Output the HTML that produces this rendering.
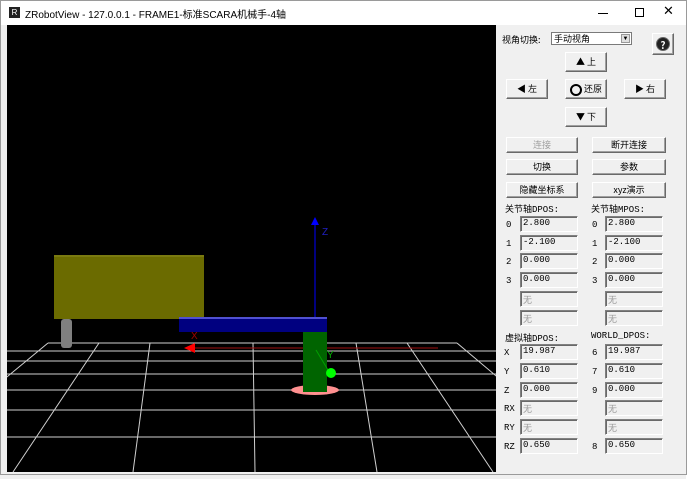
<!DOCTYPE html>
<html><head><meta charset="utf-8"><style>
*{margin:0;padding:0;box-sizing:border-box}
body{width:692px;height:479px;background:#fff;position:relative;overflow:hidden;font-family:"Liberation Sans","Noto Sans CJK SC",sans-serif;font-size:9px;color:#000}
.a{position:absolute}
.panel{left:496px;top:25px;width:190px;height:449px;background:#f0f0f0}
.btn{position:absolute;background:#f0f0f0;border:1px solid;border-color:#fff #696969 #696969 #fff;box-shadow:inset -1px -1px 0 #a0a0a0;font-size:9px;text-align:center;font-family:"Noto Sans CJK SC",sans-serif}
.inp{position:absolute;width:58px;height:16px;border:1px solid;border-color:#808080 #fff #fff #808080;box-shadow:inset 1px 1px 0 #696969;font-family:"Liberation Mono",monospace;font-size:9px;padding:1px 0 0 2px;color:#000}
.dis{color:#999;font-family:"Noto Sans CJK SC",sans-serif}
.lb{position:absolute;font-family:"Liberation Mono","Noto Sans CJK SC",monospace;font-size:9px}
</style></head><body>
<div class="a" style="left:0;top:0;width:692px;height:25px;background:#fff"></div>
<div class="a" style="left:9px;top:7px;width:11px;height:11px;background:#222;color:#fff;font-size:8px;line-height:11px;text-align:center">R</div>
<div class="a" style="left:25px;top:6px;font-size:10px;color:#000;font-family:'Liberation Sans','Noto Sans CJK SC',sans-serif">ZRobotView - 127.0.0.1 - FRAME1-标准SCARA机械手-4轴</div>
<div class="a" style="left:598px;top:13px;width:10px;height:1px;background:#000"></div>
<div class="a" style="left:635px;top:8px;width:9px;height:9px;border:1px solid #000"></div>
<div class="a" style="left:663px;top:3px;font-size:13px;color:#000">✕</div>
<div class="a" style="left:0;top:25px;width:692px;height:454px;background:#f0f0f0"></div>
<div class="a" style="left:686px;top:25px;width:6px;height:454px;background:#fff"></div>
<svg class="a" style="left:7px;top:25px" width="489" height="447" viewBox="7 25 489 447">
<rect x="7" y="25" width="489" height="447" fill="#000"/>
<g stroke="#d0d0d0" stroke-width="1">
<line x1="48" y1="343" x2="457" y2="343"/>
<line x1="7" y1="351" x2="496" y2="351"/>
<line x1="7" y1="361" x2="496" y2="361"/>
<line x1="7" y1="374" x2="496" y2="374"/>
<line x1="7" y1="390" x2="496" y2="390"/>
<line x1="7" y1="410" x2="496" y2="410"/>
<line x1="7" y1="437" x2="496" y2="437"/>
<line x1="253" y1="343" x2="255" y2="472"/>
<line x1="150" y1="343" x2="133" y2="472"/>
<line x1="99" y1="343" x2="13" y2="472"/>
<line x1="48" y1="343" x2="-108" y2="472"/>
<line x1="-3" y1="343" x2="-229" y2="472"/>
<line x1="356" y1="343" x2="377" y2="472"/>
<line x1="407" y1="343" x2="493" y2="472"/>
<line x1="457" y1="343" x2="610" y2="472"/>
<line x1="508" y1="343" x2="730" y2="472"/>
</g>
<line x1="190" y1="348" x2="438" y2="348" stroke="#a01010"/>
<polygon points="184,348 195,343 195,353" fill="#f00"/>
<text x="191" y="339" fill="#a00000" font-size="10" font-family="Liberation Sans">X</text>
<rect x="54" y="255" width="150" height="64" fill="#6b6b00"/>
<rect x="54" y="255" width="150" height="2" fill="#7a7a10"/>
<rect x="61" y="319" width="11" height="29" rx="3" fill="#808080"/>
<ellipse cx="315" cy="390" rx="24" ry="5" fill="#ff9090"/>
<rect x="303" y="331" width="24" height="61" fill="#006400"/>
<rect x="179" y="318" width="148" height="14" fill="#000080"/>
<rect x="179" y="317" width="148" height="2" fill="#5050d0"/>
<line x1="315" y1="223" x2="315" y2="317" stroke="#0000ff"/>
<polygon points="315,217 311,225 319,225" fill="#0000ff"/>
<text x="322" y="235" fill="#2020c0" font-size="10" font-family="Liberation Sans">Z</text>
<line x1="316" y1="350" x2="328" y2="370" stroke="#00a000"/>
<text x="327" y="358" fill="#00b000" font-size="10" font-family="Liberation Sans">Y</text>
<circle cx="331" cy="373" r="5" fill="#00ff00"/>
</svg>
<div class="a panel"></div>
<div class="lb" style="left:502px;top:33px;font-family:'Noto Sans CJK SC',sans-serif">视角切换:</div>
<div class="a" style="left:551px;top:32px;width:81px;height:13px;background:#fff;border:1px solid #7a7a7a;font-family:'Noto Sans CJK SC',sans-serif;font-size:9px;line-height:11px;padding-left:2px">手动视角</div>
<div class="a" style="left:621px;top:34px;width:9px;height:9px;background:#e0e0e0;border:1px solid #999;font-size:6px;line-height:8px;text-align:center">▼</div>
<div class="btn" style="left:652px;top:33px;width:22px;height:22px"><div style="margin:3px auto;width:14px;height:14px;border-radius:50%;background:#222;color:#fff;font-weight:bold;font-size:10px;line-height:14px;border:1px solid #666">?</div></div>
<div class="btn" style="left:565px;top:52px;width:42px;height:20px;line-height:18px">▲ 上</div>
<div class="btn" style="left:506px;top:79px;width:42px;height:20px;line-height:18px">◀ 左</div>
<div class="btn" style="left:565px;top:79px;width:42px;height:20px;line-height:18px"><span style="display:inline-block;width:12px;height:12px;border:2px solid #000;border-radius:50%;vertical-align:middle"></span> 还原</div>
<div class="btn" style="left:624px;top:79px;width:42px;height:20px;line-height:18px">▶ 右</div>
<div class="btn" style="left:565px;top:107px;width:42px;height:20px;line-height:18px">▼ 下</div>
<div class="btn" style="left:506px;top:137px;width:72px;height:16px;line-height:14px;color:#a0a0a0">连接</div>
<div class="btn" style="left:592px;top:137px;width:74px;height:16px;line-height:14px">断开连接</div>
<div class="btn" style="left:506px;top:159px;width:72px;height:16px;line-height:14px">切换</div>
<div class="btn" style="left:592px;top:159px;width:74px;height:16px;line-height:14px">参数</div>
<div class="btn" style="left:506px;top:182px;width:72px;height:16px;line-height:14px">隐藏坐标系</div>
<div class="btn" style="left:592px;top:182px;width:74px;height:16px;line-height:14px">xyz演示</div>
<div class="lb" style="left:505px;top:202px">关节轴DPOS:</div>
<div class="lb" style="left:591px;top:202px">关节轴MPOS:</div>
<div class="lb" style="left:505px;top:331px">虚拟轴DPOS:</div>
<div class="lb" style="left:591px;top:331px">WORLD_DPOS:</div>

<div class="lb" style="left:506px;top:220px">0</div><div class="inp" style="left:520px;top:216px">2.800</div>
<div class="lb" style="left:506px;top:239px">1</div><div class="inp" style="left:520px;top:235px">-2.100</div>
<div class="lb" style="left:506px;top:257px">2</div><div class="inp" style="left:520px;top:253px">0.000</div>
<div class="lb" style="left:506px;top:276px">3</div><div class="inp" style="left:520px;top:272px">0.000</div>
<div class="inp dis" style="left:520px;top:291px">无</div>
<div class="inp dis" style="left:520px;top:310px">无</div>

<div class="lb" style="left:592px;top:220px">0</div><div class="inp" style="left:605px;top:216px">2.800</div>
<div class="lb" style="left:592px;top:239px">1</div><div class="inp" style="left:605px;top:235px">-2.100</div>
<div class="lb" style="left:592px;top:257px">2</div><div class="inp" style="left:605px;top:253px">0.000</div>
<div class="lb" style="left:592px;top:276px">3</div><div class="inp" style="left:605px;top:272px">0.000</div>
<div class="inp dis" style="left:605px;top:291px">无</div>
<div class="inp dis" style="left:605px;top:310px">无</div>

<div class="lb" style="left:504px;top:348px">X</div><div class="inp" style="left:520px;top:344px">19.987</div>
<div class="lb" style="left:504px;top:367px">Y</div><div class="inp" style="left:520px;top:363px">0.610</div>
<div class="lb" style="left:504px;top:386px">Z</div><div class="inp" style="left:520px;top:382px">0.000</div>
<div class="lb" style="left:504px;top:404px">RX</div><div class="inp dis" style="left:520px;top:400px">无</div>
<div class="lb" style="left:504px;top:423px">RY</div><div class="inp dis" style="left:520px;top:419px">无</div>
<div class="lb" style="left:504px;top:442px">RZ</div><div class="inp" style="left:520px;top:438px">0.650</div>

<div class="lb" style="left:592px;top:348px">6</div><div class="inp" style="left:605px;top:344px">19.987</div>
<div class="lb" style="left:592px;top:367px">7</div><div class="inp" style="left:605px;top:363px">0.610</div>
<div class="lb" style="left:592px;top:386px">9</div><div class="inp" style="left:605px;top:382px">0.000</div>
<div class="inp dis" style="left:605px;top:400px">无</div>
<div class="inp dis" style="left:605px;top:419px">无</div>
<div class="lb" style="left:592px;top:442px">8</div><div class="inp" style="left:605px;top:438px">0.650</div>
<div class="a" style="left:0;top:0;width:687px;height:475px;border:1px solid #9a9a9a"></div>
</body></html>
